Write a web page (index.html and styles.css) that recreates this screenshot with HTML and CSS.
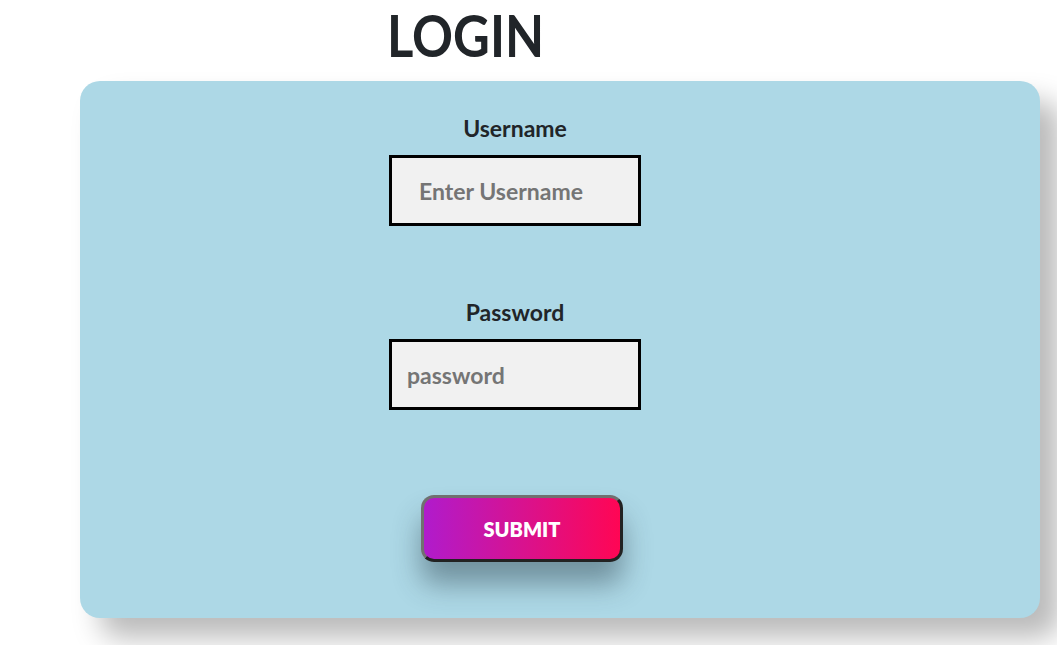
FILE: index.html
```html
<!DOCTYPE html>
<html lang="en">
<head>
<meta charset="utf-8">
<title>Login</title>
<link rel="stylesheet" href="styles.css">
</head>
<body>
  <div class="page">
    <h1 class="title"><span class="title-text">LOGIN</span></h1>
    <form class="card">
      <div class="fields">
        <div class="field">
          <label class="label" for="u">Username</label>
          <input class="input input-user" id="u" type="text" placeholder="Enter Username">
        </div>
        <div class="field field-pass">
          <label class="label" for="p">Password</label>
          <input class="input input-pass" id="p" type="password" placeholder="password">
        </div>
        <button class="submit" type="button">SUBMIT</button>
      </div>
    </form>
  </div>
</body>
</html>
```
FILE: styles.css
```css
* { box-sizing: border-box; }
html, body { margin: 0; padding: 0; background: #fff; overflow: hidden; }
body { font-family: Lato, "Open Sans", sans-serif; color: #212529; }
.page { display: flex; flex-direction: column; padding-left: 80px; width: 1057px; height: 645px; }
.title {
  margin: 0;
  padding-left: 307px;
  font-size: 58px;
  font-weight: 700;
  line-height: 70px;
  height: 81px;
}
.title-text {
  display: inline-block;
  transform: scaleX(0.875);
  transform-origin: left center;
  letter-spacing: 0;
}
.card {
  width: 960px;
  height: 537px;
  margin: 0;
  background: #add8e6;
  border-radius: 20px;
  box-shadow: 20px 20px 28px rgba(0,0,0,0.27);
}
.fields { display: flex; flex-direction: column; width: 252px; margin-left: 309px; padding-top: 34px; }
.field { display: flex; flex-direction: column; align-items: center; }
.field-pass { margin-top: 73px; }
.label { font-size: 23px; font-weight: 700; line-height: 26px; margin-bottom: 14px; }
.input {
  width: 252px; height: 71px;
  border: 3px solid #000;
  background: #f1f1f1;
  font-family: Lato, sans-serif;
  font-size: 23px; font-weight: 700;
  color: #333;
  outline: none;
}
.input::placeholder { color: #757575; opacity: 1; }
.input-user { padding-left: 27px; }
.input-pass { padding-left: 15px; }
.submit {
  align-self: flex-start;
  margin-left: 32px;
  margin-top: 85px;
  width: 202px; height: 67px;
  border: 3px solid;
  border-color: #707070 #222 #222 #707070;
  border-radius: 13px;
  background: linear-gradient(90deg, #b01bcc 0%, #d8128f 50%, #ff0654 100%);
  color: #fff;
  font-family: Lato, sans-serif;
  font-size: 20px; font-weight: 800;
  box-shadow: 0 22px 28px rgba(40,60,70,0.45);
}
```
